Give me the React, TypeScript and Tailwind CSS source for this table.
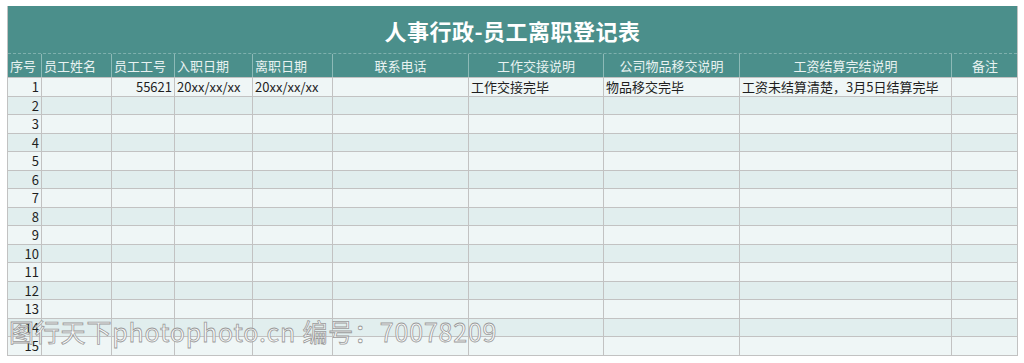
import React from "react";

const cols = [
  { title: "序号", align: "text-left" },
  { title: "员工姓名", align: "text-left" },
  { title: "员工工号", align: "text-left" },
  { title: "入职日期", align: "text-left" },
  { title: "离职日期", align: "text-left" },
  { title: "联系电话", align: "text-center" },
  { title: "工作交接说明", align: "text-center" },
  { title: "公司物品移交说明", align: "text-center" },
  { title: "工资结算完结说明", align: "text-center" },
  { title: "备注", align: "text-center" },
];

const firstRow = ["", "55621", "20xx/xx/xx", "20xx/xx/xx", "", "工作交接完毕", "物品移交完毕", "工资未结算清楚，3月5日结算完毕", ""];

const gridCols = "grid grid-cols-[34px_70px_63px_78px_80px_136px_135px_136px_212px_66px]";

export default function App() {
  const rows = Array.from({ length: 15 }, (_, i) => i + 1);

  return (
    <div className="relative w-[1024px] h-[363px] bg-white overflow-hidden font-['Noto_Sans_CJK_SC',sans-serif]">
      <div className="ml-[7px] mt-[6px] w-[1011px] border-l border-r border-b border-[#c2c2c2]">
        {/* Title */}
        <div className="h-[47px] bg-[#4b8f8b] flex items-center justify-center">
          <h1 className="text-white text-[22px] font-bold leading-none tracking-[0.5px]">人事行政-员工离职登记表</h1>
        </div>

        {/* Header */}
        <div className={`${gridCols} h-[24px] bg-[#4b8f8b] border-t border-dashed border-[#7fb0ad]`}>
          {cols.map((c, i) => (
            <div
              key={c.title}
              className={`${c.align} px-[2px] text-[13px] leading-[23px] text-[#e8f2f1] ${i < cols.length - 1 ? "border-r border-[#8dbab7]" : ""}`}
            >
              {c.title}
            </div>
          ))}
        </div>

        {/* Body */}
        {rows.map((n) => (
          <div
            key={n}
            className={`${gridCols} ${n % 2 === 1 ? "h-[19px] bg-[#eff6f6]" : "h-[18px] bg-[#e1eeee]"} border-t border-[#c2c2c2] text-[13px] text-[#1e1e1e]`}
          >
            <div className="border-r border-[#c2c2c2] text-right pr-[2px] leading-[17px]">{n}</div>
            {cols.slice(1).map((c, i) => {
              const v = n === 1 ? firstRow[i] : "";
              const right = i === 1;
              return (
                <div
                  key={c.title}
                  className={`${i < cols.length - 2 ? "border-r border-[#c2c2c2]" : ""} ${right ? "text-right pr-[2px]" : "text-left pl-[2px]"} leading-[17px] whitespace-nowrap overflow-hidden`}
                >
                  {v}
                </div>
              );
            })}
          </div>
        ))}
      </div>

      {/* Watermark */}
      <div className="absolute left-[9px] top-[316px] text-[25px] leading-[30px] tracking-[0.8px] text-white/90 [-webkit-text-stroke:0.8px_#9a9a9a] font-['Noto_Sans_CJK_SC',sans-serif] whitespace-nowrap">
        图行天下photophoto.cn 编号：70078209
      </div>
    </div>
  );
}
